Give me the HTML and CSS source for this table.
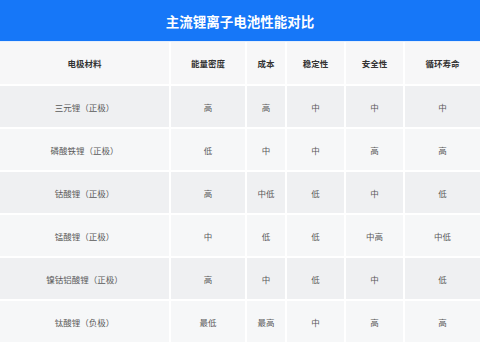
FILE: index.html
```html
<!DOCTYPE html>
<html lang="zh">
<head>
<meta charset="utf-8">
<link rel="stylesheet" href="styles.css">
</head>
<body>
<div class="page">
  <div class="title">主流锂离子电池性能对比</div>
  <div class="table">
    <div class="cell head">电极材料</div>
    <div class="cell head">能量密度</div>
    <div class="cell head">成本</div>
    <div class="cell head">稳定性</div>
    <div class="cell head">安全性</div>
    <div class="cell head">循环寿命</div>

    <div class="cell odd">三元锂（正极）</div>
    <div class="cell odd">高</div>
    <div class="cell odd">高</div>
    <div class="cell odd">中</div>
    <div class="cell odd">中</div>
    <div class="cell odd">中</div>

    <div class="cell even">磷酸铁锂（正极）</div>
    <div class="cell even">低</div>
    <div class="cell even">中</div>
    <div class="cell even">中</div>
    <div class="cell even">高</div>
    <div class="cell even">高</div>

    <div class="cell odd">钴酸锂（正极）</div>
    <div class="cell odd">高</div>
    <div class="cell odd">中低</div>
    <div class="cell odd">低</div>
    <div class="cell odd">中</div>
    <div class="cell odd">低</div>

    <div class="cell even">锰酸锂（正极）</div>
    <div class="cell even">中</div>
    <div class="cell even">低</div>
    <div class="cell even">低</div>
    <div class="cell even">中高</div>
    <div class="cell even">中低</div>

    <div class="cell odd">镍钴铝酸锂（正极）</div>
    <div class="cell odd">高</div>
    <div class="cell odd">中</div>
    <div class="cell odd">低</div>
    <div class="cell odd">中</div>
    <div class="cell odd">低</div>

    <div class="cell even">钛酸锂（负极）</div>
    <div class="cell even">最低</div>
    <div class="cell even">最高</div>
    <div class="cell even">中</div>
    <div class="cell even">高</div>
    <div class="cell even">高</div>
  </div>
</div>
</body>
</html>
```

FILE: styles.css
```css
html, body {
  margin: 0;
  padding: 0;
  background: #ffffff;
}
body {
  font-family: "Noto Sans CJK SC", "Noto Sans", sans-serif;
  width: 480px;
  height: 342px;
  overflow: hidden;
}
.page {
  display: flex;
  flex-direction: column;
}
.title {
  height: 41px;
  background: #1677f8;
  color: #ffffff;
  font-size: 13.5px;
  font-weight: 700;
  display: flex;
  align-items: center;
  justify-content: center;
  border-bottom: 1px solid #e4eefc;
}
.table {
  display: grid;
  grid-template-columns: 169px 74px 38px 57px 57px 1fr;
  grid-template-rows: 42px repeat(6, 41px);
  gap: 2px;
  background: #ffffff;
}
.cell {
  display: flex;
  align-items: center;
  justify-content: center;
  font-size: 8.5px;
  color: #5a5a5a;
}
.head {
  background: #f7f7f8;
  color: #333333;
  font-weight: 700;
}
.odd {
  background: #eff0f2;
}
.even {
  background: #f6f7f8;
}
```
